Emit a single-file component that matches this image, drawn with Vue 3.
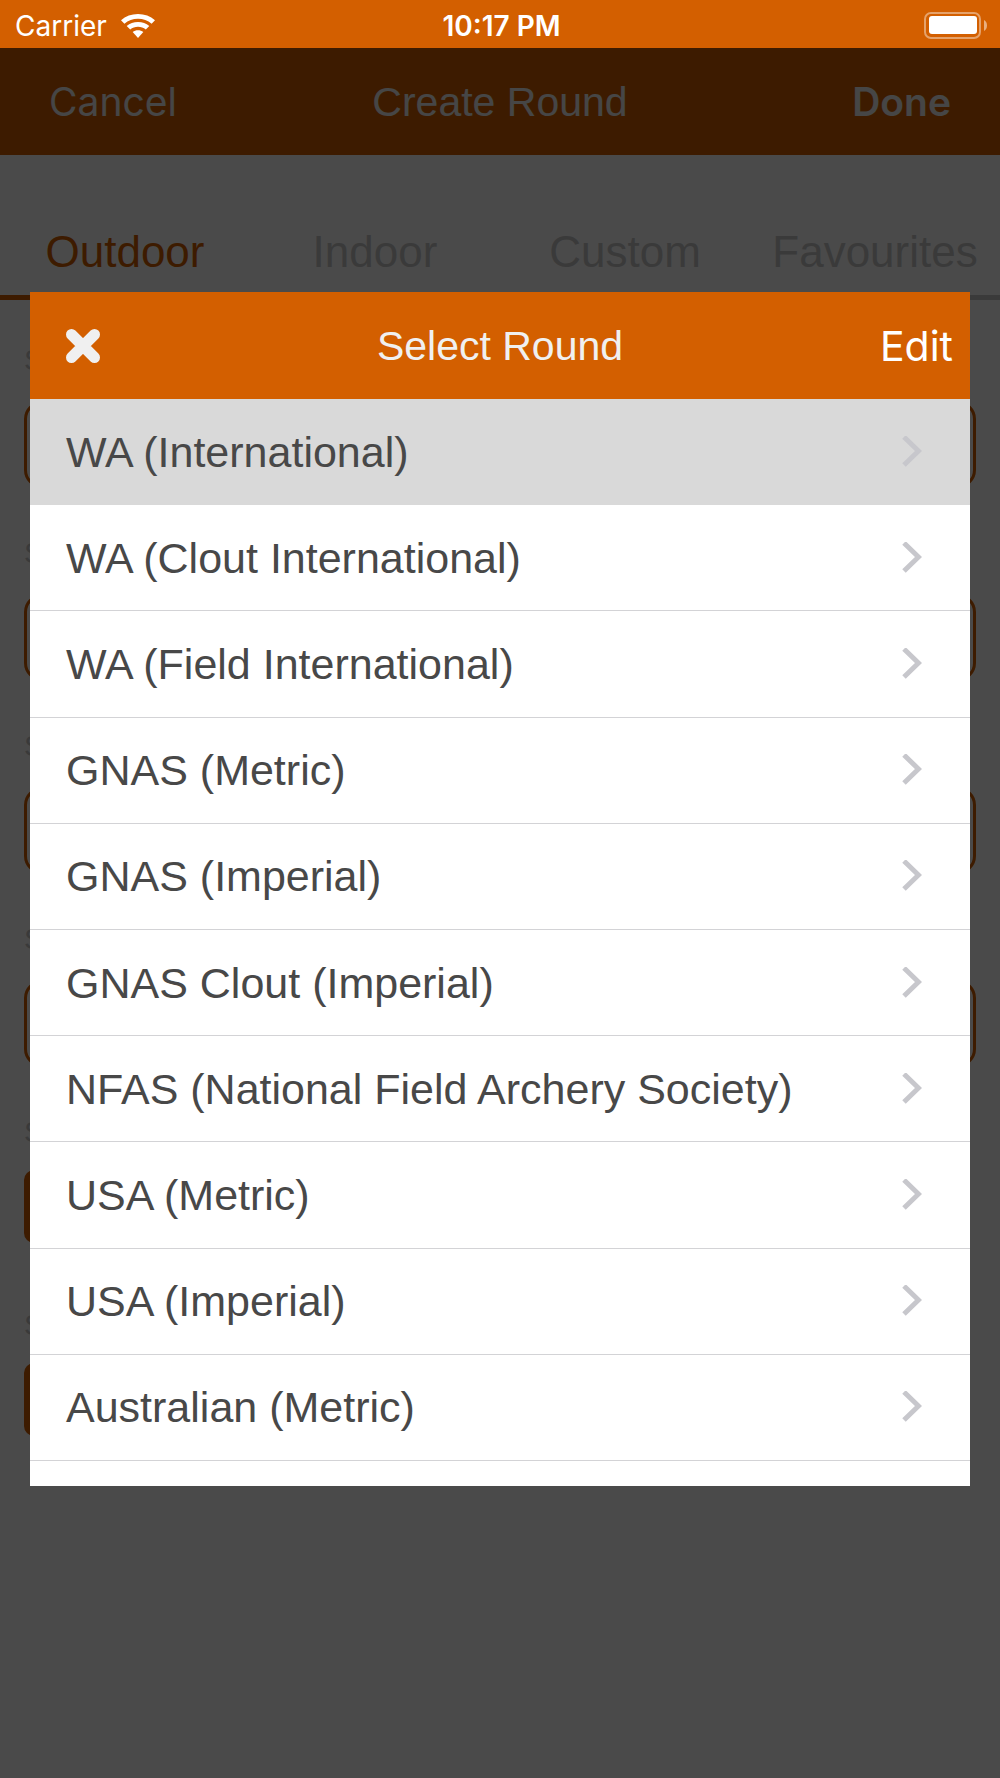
<script setup>
import { ref } from 'vue'

const tabs = ['Outdoor', 'Indoor', 'Custom', 'Favourites']
const activeTab = ref('Outdoor')

const fields = [
  { id: 'field-1', type: 'text' },
  { id: 'field-2', type: 'text' },
  { id: 'field-3', type: 'text' },
  { id: 'field-4', type: 'text' },
  { id: 'field-5', type: 'button' },
  { id: 'field-6', type: 'button' },
]

const rounds = [
  'WA (International)',
  'WA (Clout International)',
  'WA (Field International)',
  'GNAS (Metric)',
  'GNAS (Imperial)',
  'GNAS Clout (Imperial)',
  'NFAS (National Field Archery Society)',
  'USA (Metric)',
  'USA (Imperial)',
  'Australian (Metric)',
]
const selected = ref('WA (International)')
</script>

<template>
  <div class="screen">
    <header class="status">
      <div class="carrier">
        <span>Carrier</span>
        <svg class="wifi" viewBox="0 0 34 24" aria-hidden="true">
          <path d="M0 6.2C4.600 2.200 10.500 0 17 0s12.400 2.200 17 6.200l-3.400 3.500C26.800 6.400 22.100 4.700 17 4.700S7.200 6.400 3.400 9.700z" />
          <path d="M5.700 12C8.800 9.400 12.700 8 17 8s8.200 1.400 11.300 4l-3.500 3.500c-2.200-1.700-4.900-2.700-7.800-2.700s-5.600 1-7.800 2.700z" />
          <path d="M11.700 18c1.500-1.100 3.300-1.700 5.300-1.700s3.800.6 5.300 1.700L17 24z" />
        </svg>
      </div>
      <span class="clock">10:17 PM</span>
      <svg class="battery" viewBox="0 0 64 28" aria-hidden="true">
        <rect x="1" y="1" width="55" height="25" rx="6" fill="none" stroke="#fff" stroke-opacity=".42" stroke-width="2" />
        <rect x="5" y="4" width="48" height="18" rx="3" fill="#fff" />
        <path d="M60 8c4 2 4 9 0 11z" fill="#fff" fill-opacity=".5" />
      </svg>
    </header>

    <nav class="navbar">
      <button class="nav-btn" type="button">Cancel</button>
      <h1 class="title">Create Round</h1>
      <button class="nav-btn done" type="button">Done</button>
    </nav>

    <div class="tabs">
      <button
        v-for="tab in tabs"
        :key="tab"
        type="button"
        class="tab"
        :class="{ active: tab === activeTab }"
        @click="activeTab = tab"
      >{{ tab }}</button>
    </div>

    <form class="form">
      <div v-for="field in fields" :key="field.id" class="field">
        <label :for="field.id">S</label>
        <input v-if="field.type === 'text'" :id="field.id" class="box" type="text" />
        <button v-else :id="field.id" class="solid" type="button"></button>
      </div>
    </form>

    <div class="overlay">
      <section class="dialog" role="dialog" aria-labelledby="dialog-title">
        <header class="dialog-head">
          <button class="close" type="button" aria-label="Close">
            <svg viewBox="0 0 34 34" aria-hidden="true">
              <path d="M5.500 5.500l23 23M28.500 5.500l-23 23" fill="none" stroke="#f0f0f0" stroke-width="11" stroke-linecap="round" />
            </svg>
          </button>
          <h2 id="dialog-title" class="title">Select Round</h2>
          <button class="edit" type="button">Edit</button>
        </header>
        <ul class="rounds">
          <li v-for="round in rounds" :key="round">
            <button
              type="button"
              class="round"
              :class="{ selected: round === selected }"
              @click="selected = round"
            >
              <span>{{ round }}</span>
              <svg class="chevron" viewBox="0 0 20 32" aria-hidden="true">
                <path d="M2 1l14.500 14L2 29" fill="none" stroke="#c7c7cc" stroke-width="5" />
              </svg>
            </button>
          </li>
        </ul>
      </section>
    </div>
  </div>
</template>

<style>
body {
  margin: 0;
  background: #fff;
}
</style>

<style scoped>
.screen {
  position: relative;
  min-height: 100vh;
  overflow: hidden;
  background: #fff;
  font-family: "Liberation Sans", Arial, sans-serif;
}

button {
  margin: 0;
  padding: 0;
  border: 0;
  background: none;
  font: inherit;
  color: inherit;
}

.status,
.navbar,
.dialog-head {
  display: grid;
  grid-template-columns: 1fr auto 1fr;
  align-items: center;
  background: #d35f00;
}

.status {
  height: 48px;
  padding: 2px 12px 0 15px;
  box-sizing: border-box;
  color: #fff;
  font-family: Inter, sans-serif;
  font-size: 28px;
  line-height: 48px;
}

.carrier {
  display: flex;
  align-items: center;
  gap: 14px;
}

.wifi {
  width: 34px;
  height: 24px;
  fill: #fff;
}

.clock {
  font-weight: 600;
}

.battery {
  justify-self: end;
  width: 64px;
  height: 28px;
}

.navbar {
  height: 107px;
  padding: 0 49px;
  color: #f0f0f0;
}

.title {
  margin: 0;
  font-size: 41px;
  font-weight: 400;
  line-height: 48px;
}

.nav-btn {
  justify-self: start;
  font-family: Inter, sans-serif;
  font-size: 39px;
  line-height: 48px;
}

.done {
  justify-self: end;
  font-weight: 600;
}

.tabs {
  display: grid;
  grid-template-columns: repeat(4, 1fr);
  height: 145px;
}

.tab {
  padding-top: 54px;
  border-bottom: 5px solid #c8c8c8;
  color: #c8c8c8;
  font-size: 44px;
  line-height: 48px;
}

.tab.active {
  border-color: #d35f00;
  color: #d35f00;
}

.form {
  padding: 44px 24px 0;
}

.field {
  display: flex;
  flex-direction: column;
  align-items: flex-start;
  height: 193px;
}

.field label {
  color: #c8c8c8;
  font-size: 30px;
  line-height: 32px;
}

.box {
  width: 100%;
  height: 87px;
  margin-top: 25px;
  padding: 0 24px;
  box-sizing: border-box;
  border: 3px solid #d35f00;
  border-radius: 18px;
  background: #fff;
  font-size: 43px;
}

.solid {
  width: 50%;
  height: 73px;
  margin-top: 22px;
  border-radius: 10px;
  background: #d35f00;
}

.overlay {
  position: absolute;
  inset: 48px 0 0;
  padding: 244px 30px 0;
  background: rgba(0, 0, 0, 0.71);
}

.dialog {
  padding-bottom: 25px;
  background: #fff;
}

.dialog-head {
  height: 107px;
  padding: 0 17px;
  box-sizing: border-box;
  color: #f0f0f0;
}

.close {
  justify-self: start;
  width: 34px;
  height: 34px;
  margin-left: 19px;
}

.close svg {
  display: block;
}

.edit {
  justify-self: end;
  color: #fff;
  font-family: Inter, sans-serif;
  font-size: 41px;
  line-height: 48px;
}

.rounds {
  display: grid;
  grid-template-rows: repeat(10, 1fr);
  height: 1062px;
  margin: 0;
  padding: 0;
  list-style: none;
}

.round {
  display: flex;
  align-items: center;
  justify-content: space-between;
  width: 100%;
  height: 100%;
  padding: 0 48px 0 36px;
  border-bottom: 1px solid #d3d3d6;
  color: #484848;
  font-size: 43px;
  line-height: 48px;
  text-align: left;
}

.round.selected {
  border-color: #d9d9d9;
  background: #d9d9d9;
}

.chevron {
  width: 20px;
  height: 32px;
}
</style>
